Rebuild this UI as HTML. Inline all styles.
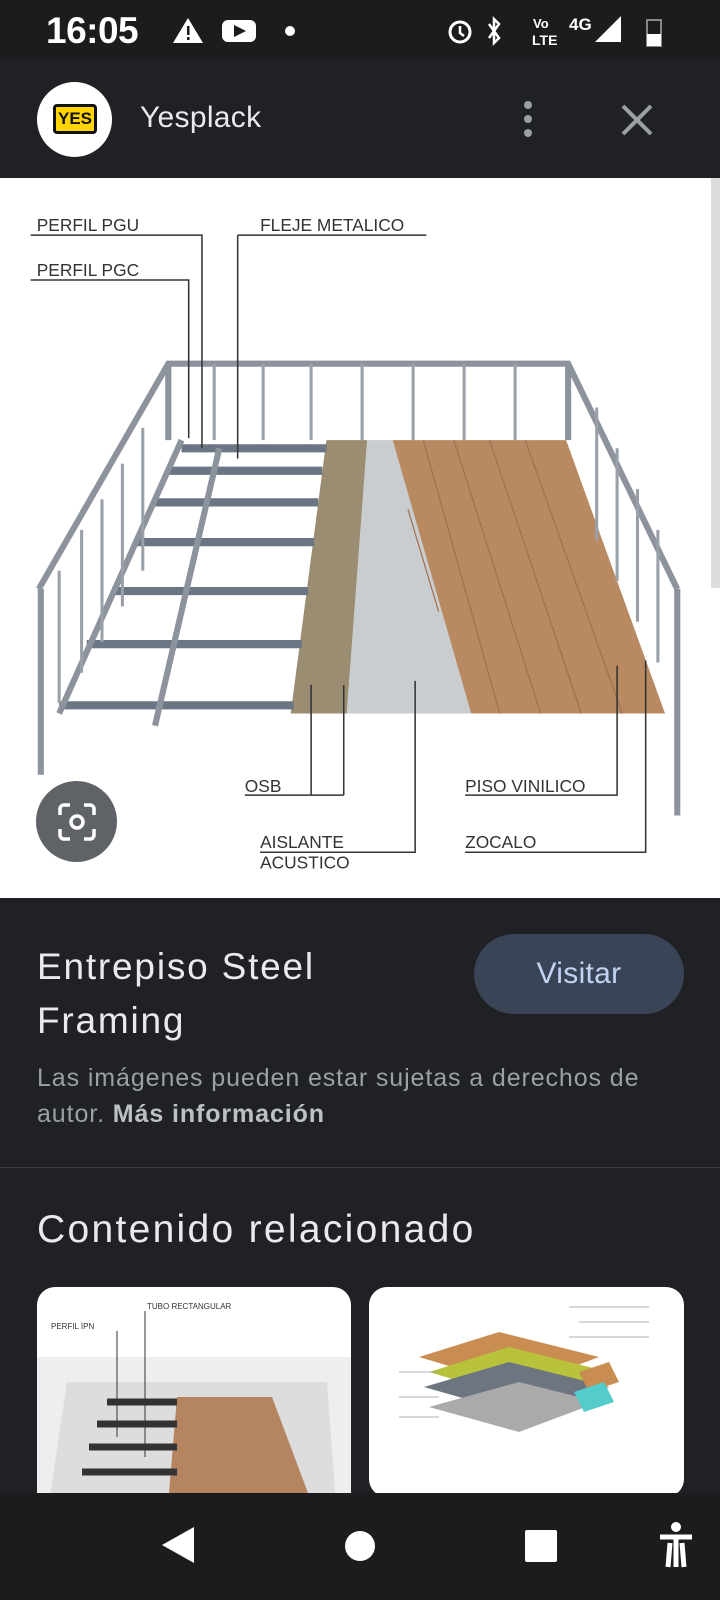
<!DOCTYPE html>
<html><head><meta charset="utf-8"><style>
*{margin:0;padding:0;box-sizing:border-box}
body{width:720px;height:1600px;background:#202124;font-family:"Liberation Sans",sans-serif;position:relative;overflow:hidden;color:#e8eaed}
.abs{position:absolute}
</style></head><body>
<div class="abs" style="left:0;top:0;width:720px;height:60px;background:#1c1c1e"></div>
<div class="abs" style="left:46px;top:10px;font-size:37px;color:#fff;font-weight:bold;letter-spacing:-0.5px">16:05</div>
<svg class="abs" style="left:172px;top:16px" width="140" height="30"><path d="M16 2L31 27H1Z" fill="#fff"/><rect x="15" y="10" width="2.5" height="9" fill="#1c1c1e"/><rect x="15" y="21" width="2.5" height="3" fill="#1c1c1e"/><rect x="50" y="4" width="34" height="22" rx="6" fill="#fff"/><path d="M62 9L74 15L62 21Z" fill="#1c1c1e"/><circle cx="118" cy="15" r="5" fill="#fff"/></svg>
<svg class="abs" style="left:445px;top:12px" width="230" height="36" fill="#fff" stroke="#fff"><circle cx="15" cy="20" r="10" fill="none" stroke-width="3"/><path d="M15 14v7l4 3" fill="none" stroke-width="2.5"/><path d="M44 12l10 14l-5 5V7l5 5l-10 14" fill="none" stroke-width="2.5"/><text x="88" y="16" font-size="13" stroke="none" font-weight="bold">Vo</text><text x="87" y="33" font-size="14" stroke="none" font-weight="bold">LTE</text><text x="124" y="18" font-size="17" stroke="none" font-weight="bold">4G</text><path d="M150 30L176 4V30Z" stroke="none"/><rect x="202" y="8" width="14" height="26" fill="none" stroke="#888" stroke-width="2"/><rect x="202" y="22" width="14" height="12" stroke="none"/></svg>
<div class="abs" style="left:0;top:60px;width:720px;height:118px;background:#202124"></div>
<div class="abs" style="left:37px;top:82px;width:75px;height:75px;border-radius:50%;background:#fff"></div>
<div class="abs" style="left:53px;top:104px;width:44px;height:30px;background:#ffd400;border:3px solid #111;border-radius:4px;font-weight:bold;font-size:17px;color:#111;text-align:center;line-height:24px">YES</div>
<div class="abs" style="left:140px;top:101px;font-size:30px;letter-spacing:0.3px;color:#e8eaed">Yesplack</div>
<svg class="abs" style="left:515px;top:100px" width="150" height="42"><circle cx="13" cy="5" r="4" fill="#9aa0a6"/><circle cx="13" cy="19" r="4" fill="#9aa0a6"/><circle cx="13" cy="33" r="4" fill="#9aa0a6"/><path d="M108 6L136 34M136 6L108 34" stroke="#9aa0a6" stroke-width="4"/></svg>
<div class="abs" style="left:0;top:178px;width:720px;height:720px;background:#fff"></div>
<div class="abs" style="left:711px;top:178px;width:9px;height:410px;background:#ddd"></div>
<svg class="abs" style="left:0;top:178px" width="710" height="720">
<g transform="scale(1.02) translate(0,-175)">
<polygon points="320,432 360,432 340,700 285,700" fill="#9b8d72"/>
<polygon points="360,432 388,432 465,700 340,700" fill="#c9cdd0"/>
<polygon points="385,432 555,432 652,700 462,700" fill="#b98a62"/>
<g stroke="#a07050" stroke-width="1.2"><path d="M415,432L490 700M445,432L530 700M480,432L570 700M515,432L610 700M400 500L430 600"/></g>
<g stroke="#6b7685" stroke-width="8" fill="none"><path d="M58 692H288M85 632H296M110 580H302M132 532H308M150 493H312M165 462H316M178 440H320"/></g>
<g stroke="#8c939c" stroke-width="6" fill="none"><path d="M38 578L165 357H557L664 578M40 578V760M664 578V800M165 357V432M557 357V432"/><path d="M58 700L178 432M152 712L215 440"/></g>
<g stroke="#9aa0a8" stroke-width="3"><path d="M210 357v75M258 357v75M305 357v75M355 357v75M405 357v75M455 357v75M505 357v75M58 560v130M80 520v140M100 490v140M120 455v140M140 420v140M585 400v130M605 440v130M625 480v130M645 520v130"/></g>
<g stroke="#333" stroke-width="1.5" fill="none"><path d="M30 231H198V440M30 275H185V430M233 231H418M233 231V450"/><path d="M240 780H337M305 780V672M337 780V672M255 836H407V668M456 780H605V653M456 836H633V648"/></g>
<g font-size="17" fill="#333"><text x="36" y="227">PERFIL PGU</text><text x="36" y="271">PERFIL PGC</text><text x="255" y="227">FLEJE METALICO</text><text x="240" y="777">OSB</text><text x="255" y="832">AISLANTE</text><text x="255" y="852">ACUSTICO</text><text x="456" y="777">PISO VINILICO</text><text x="456" y="832">ZOCALO</text></g>
</g>
</svg>
<div class="abs" style="left:36px;top:781px;width:81px;height:81px;border-radius:50%;background:#5f6368"></div>
<svg class="abs" style="left:58px;top:803px" width="38" height="38" fill="none" stroke="#fff" stroke-width="3.5"><path d="M2 12V6a4 4 0 0 1 4-4h6M26 2h6a4 4 0 0 1 4 4v6M36 26v6a4 4 0 0 1-4 4h-6M12 36H6a4 4 0 0 1-4-4v-6"/><circle cx="19" cy="19" r="6"/></svg>
<div class="abs" style="left:37px;top:940px;font-size:37px;letter-spacing:1.8px;line-height:54px;color:#e8eaed">Entrepiso Steel<br>Framing</div>
<div class="abs" style="left:474px;top:934px;width:210px;height:80px;border-radius:40px;background:#394457;color:#c2d4f2;font-size:30px;letter-spacing:0.3px;text-align:center;line-height:80px">Visitar</div>
<div class="abs" style="left:37px;top:1060px;font-size:25px;letter-spacing:0.9px;line-height:36px;color:#9aa0a6">Las imágenes pueden estar sujetas a derechos de<br>autor. <b style="color:#bdc1c6">Más información</b></div>
<div class="abs" style="left:0;top:1167px;width:720px;height:1px;background:#3c4043"></div>
<div class="abs" style="left:37px;top:1208px;font-size:39px;letter-spacing:2.3px;color:#e8eaed">Contenido relacionado</div>
<div class="abs" style="left:37px;top:1287px;width:314px;height:230px;border-radius:18px;background:#fff;overflow:hidden">
<svg width="314" height="230"><polygon points="0,70 314,70 314,230 0,230" fill="#eee"/><polygon points="30,95 290,95 300,230 10,230" fill="#ddd"/><polygon points="140,110 235,110 280,230 130,230" fill="#b48560"/><g stroke="#333" stroke-width="7"><path d="M70 115H140M60 137H140M52 160H140M45 185H140M38 210H140"/></g><g font-size="8" fill="#333"><text x="110" y="22">TUBO RECTANGULAR</text><text x="14" y="42">PERFIL IPN</text></g><path d="M108 24V170M80 44V150" stroke="#333"/></svg></div>
<div class="abs" style="left:369px;top:1287px;width:315px;height:210px;border-radius:18px;background:#fff;overflow:hidden">
<svg width="315" height="210"><polygon points="50,70 130,45 230,70 150,100" fill="#c98d52"/><polygon points="60,85 140,60 240,85 160,115" fill="#b8c23a"/><polygon points="55,100 140,75 240,100 160,130" fill="#6d7580"/><polygon points="60,120 150,95 230,115 150,145" fill="#aaa"/><polygon points="210,85 240,75 250,95 220,105" fill="#c98d52"/><polygon points="205,105 235,95 245,115 215,125" fill="#5cc"/><g stroke="#999" stroke-width=".7"><path d="M200 20H280M210 35H280M200 50H280M30 85H70M30 110H70M30 130H70"/></g></svg></div>
<div class="abs" style="left:0;top:1493px;width:720px;height:107px;background:#1c1c1e"></div>
<svg class="abs" style="left:0;top:1493px" width="720" height="107"><path d="M194 34V70L162 52Z" fill="#fff"/><circle cx="360" cy="53" r="15" fill="#fff"/><rect x="525" y="37" width="32" height="32" rx="2" fill="#fff"/><circle cx="676" cy="34" r="5" fill="#fff"/><path d="M660 44H692M676 44V74M670 50L668 74M682 50L684 74" stroke="#fff" stroke-width="5"/></svg>
</body></html>
